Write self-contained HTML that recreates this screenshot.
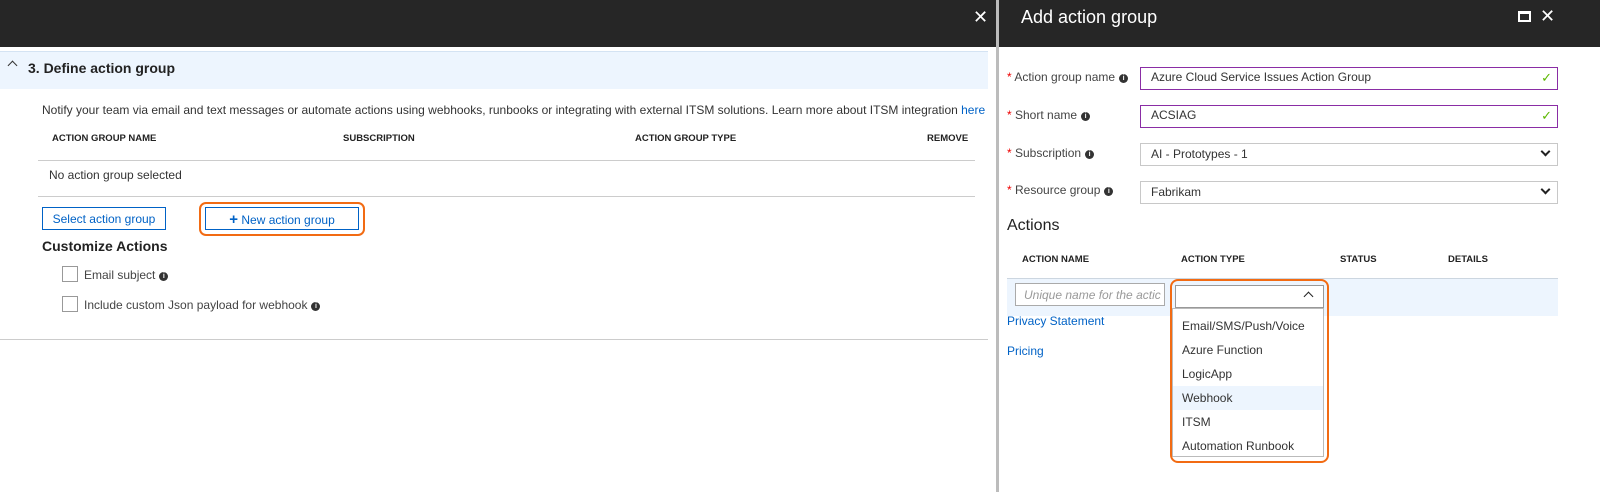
<!DOCTYPE html>
<html><head><style>
*{box-sizing:border-box;margin:0;padding:0}
body{width:1600px;height:492px;background:#fff;font-family:"Liberation Sans",sans-serif;font-size:12px;color:#333;position:relative;overflow:hidden}
.a{position:absolute;white-space:nowrap}
.dark{background:#262626}
.h{font-size:9.5px;font-weight:bold;color:#222}
.lnk{color:#0062c6}
.info{display:inline-block;width:9px;height:9px;border-radius:50%;background:#333;color:#fff;font-size:7px;font-weight:bold;text-align:center;line-height:9px;vertical-align:1px;margin-left:4px}
.star{color:#e00;}
.inp{position:absolute;left:1140px;width:418px;height:23px;border:1px solid #c8c8c8;padding:3px 10px;font-size:12px}
.pur{border-color:#8a2da5}
.chk{position:absolute;right:5px;top:2px;color:#5cb800;font-size:13px}
.chev{position:absolute;right:8px;top:4px;width:7px;height:7px;border-right:2px solid #222;border-bottom:2px solid #222;transform:rotate(45deg)}
.cb{position:absolute;width:16px;height:16px;border:1px solid #999;background:#fff}
.it{position:absolute;left:1173px;width:150px;height:24px;padding:5px 9px;font-size:12px;color:#333}
</style></head><body>
<div class="a dark" style="left:0;top:0;width:996px;height:47px"></div>
<div class="a dark" style="left:999px;top:0;width:601px;height:47px"></div>
<div class="a" style="left:996px;top:0;width:3px;height:492px;background:#bcbcbc"></div>
<div class="a" style="left:973px;top:7px;color:#fff;font-size:18px">✕</div>
<div class="a" style="left:1021px;top:7px;color:#fff;font-size:18px">Add action group</div>
<div class="a" style="left:1518px;top:11px;width:13px;height:11px;border:2px solid #fff;border-top-width:3px"></div>
<div class="a" style="left:1540px;top:6px;color:#fff;font-size:18px">✕</div>

<div class="a" style="left:0;top:51px;width:988px;height:38px;background:#edf5fe;border-top:1px solid #d4e3f3"></div>
<div class="a" style="left:9px;top:62px;width:7px;height:7px;border-left:1.5px solid #333;border-top:1.5px solid #333;transform:rotate(45deg)"></div>
<div class="a" style="left:28px;top:60px;font-size:14px;font-weight:bold;color:#222">3. Define action group</div>
<div class="a" style="left:42px;top:103px">Notify your team via email and text messages or automate actions using webhooks, runbooks or integrating with external ITSM solutions. Learn more about ITSM integration <span class="lnk">here</span></div>
<div class="a h" style="left:52px;top:133px">ACTION GROUP NAME</div>
<div class="a h" style="left:343px;top:133px">SUBSCRIPTION</div>
<div class="a h" style="left:635px;top:133px">ACTION GROUP TYPE</div>
<div class="a h" style="left:927px;top:133px">REMOVE</div>
<div class="a" style="left:38px;top:160px;width:937px;height:1px;background:#ccc"></div>
<div class="a" style="left:49px;top:168px">No action group selected</div>
<div class="a" style="left:38px;top:196px;width:937px;height:1px;background:#ccc"></div>
<div class="a" style="left:42px;top:207px;width:124px;height:23px;border:1px solid #0062c6;color:#0062c6;text-align:center;padding-top:4px">Select action group</div>
<div class="a" style="left:199px;top:202px;width:166px;height:34px;border:2px solid #f26b13;border-radius:7px"></div>
<div class="a" style="left:205px;top:207px;width:154px;height:23px;border:1px solid #0062c6;color:#0062c6;text-align:center;padding-top:3px"><b style="font-size:15px">+</b> New action group</div>
<div class="a" style="left:42px;top:238px;font-size:14px;font-weight:bold;color:#222">Customize Actions</div>
<div class="cb" style="left:62px;top:266px"></div>
<div class="a" style="left:84px;top:268px;color:#444">Email subject<span class="info">i</span></div>
<div class="cb" style="left:62px;top:296px"></div>
<div class="a" style="left:84px;top:298px;color:#444">Include custom Json payload for webhook<span class="info">i</span></div>
<div class="a" style="left:0;top:339px;width:988px;height:1px;background:#ccc"></div>

<div class="a" style="left:1007px;top:70px;color:#444"><span class="star">*</span> Action group name<span class="info">i</span></div>
<div class="a" style="left:1007px;top:108px;color:#444"><span class="star">*</span> Short name<span class="info">i</span></div>
<div class="a" style="left:1007px;top:146px;color:#444"><span class="star">*</span> Subscription<span class="info">i</span></div>
<div class="a" style="left:1007px;top:183px;color:#444"><span class="star">*</span> Resource group<span class="info">i</span></div>
<div class="inp pur" style="top:67px;padding-top:2px">Azure Cloud Service Issues Action Group<span class="chk">✓</span></div>
<div class="inp pur" style="top:105px;padding-top:2px">ACSIAG<span class="chk">✓</span></div>
<div class="inp" style="top:143px">AI - Prototypes - 1<span class="chev"></span></div>
<div class="inp" style="top:181px">Fabrikam<span class="chev"></span></div>
<div class="a" style="left:1007px;top:217px;font-size:16px;color:#222">Actions</div>
<div class="a h" style="left:1022px;top:254px">ACTION NAME</div>
<div class="a h" style="left:1181px;top:254px">ACTION TYPE</div>
<div class="a h" style="left:1340px;top:254px">STATUS</div>
<div class="a h" style="left:1448px;top:254px">DETAILS</div>
<div class="a" style="left:1007px;top:278px;width:551px;height:38px;background:#edf5fe;border-top:1px solid #ccd6e0"></div>
<div class="a" style="left:1015px;top:283px;width:150px;height:23px;border:1px solid #aaa;background:#fff;padding:4px 8px;color:#999;font-style:italic;overflow:hidden">Unique name for the actic</div>
<div class="a" style="left:1175px;top:285px;width:149px;height:23px;border:1px solid #999;background:#fff"></div>
<div class="a" style="left:1305px;top:293px;width:7px;height:7px;border-left:1.5px solid #222;border-top:1.5px solid #222;transform:rotate(45deg)"></div>
<div class="a" style="left:1172px;top:308px;width:152px;height:149px;border:1px solid #bbb;background:#fff"></div>
<div class="it" style="top:314px">Email/SMS/Push/Voice</div>
<div class="it" style="top:338px">Azure Function</div>
<div class="it" style="top:362px">LogicApp</div>
<div class="it" style="top:386px;background:#edf5fe">Webhook</div>
<div class="it" style="top:410px">ITSM</div>
<div class="it" style="top:434px">Automation Runbook</div>
<div class="a" style="left:1170px;top:279px;width:159px;height:184px;border:2px solid #f26b13;border-radius:8px"></div>
<div class="a lnk" style="left:1007px;top:314px">Privacy Statement</div>
<div class="a lnk" style="left:1007px;top:344px">Pricing</div>
</body></html>
